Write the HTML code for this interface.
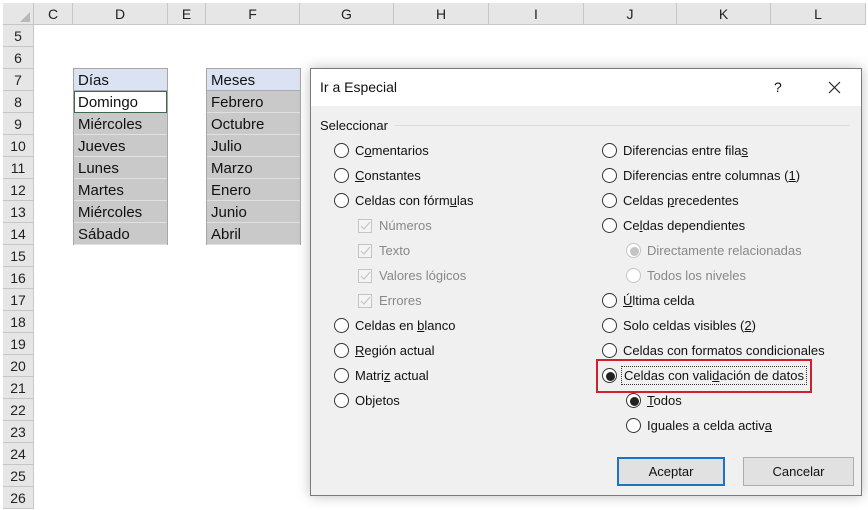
<!DOCTYPE html>
<html><head><meta charset="utf-8"><style>
*{margin:0;padding:0;box-sizing:border-box}
body{width:868px;height:508px;overflow:hidden;background:#fff;font-family:"Liberation Sans",sans-serif;position:relative}
.a{position:absolute}
.ch{position:absolute;top:3px;height:22px;background:#e6e6e6;border-right:1px solid #c6c6c6;border-bottom:1px solid #c6c6c6;font-size:14px;line-height:22px;text-align:center;color:#222}
.rh{position:absolute;left:3px;width:31px;height:22px;background:#e6e6e6;border-bottom:1px solid #c6c6c6;border-right:1px solid #c6c6c6;font-size:14px;line-height:23px;text-align:center;color:#222}
.cell{position:absolute;height:22px;font-size:15px;line-height:24px;padding-left:4px;color:#111;border-bottom:1px solid #e0e0e0;background:#c9c9c9;overflow:hidden}
.o{position:absolute;font-size:13px;line-height:18px;height:18px;color:#111;white-space:nowrap}
.r{position:absolute;width:15px;height:15px;border:1px solid #333;border-radius:50%;background:#fff}
.dis{color:#888}
.dis .r{border-color:#c4c4c4}
.cb{position:absolute;width:14px;height:14px;border:1px solid #c4c4c4;background:#f4f4f4}
u{text-decoration:underline}
</style></head><body>
<div class="ch" style="left:3px;width:31px"></div>
<div class="ch" style="left:34px;width:39px">C</div>
<div class="ch" style="left:73px;width:95px">D</div>
<div class="ch" style="left:168px;width:38px">E</div>
<div class="ch" style="left:206px;width:94px">F</div>
<div class="ch" style="left:300px;width:94px">G</div>
<div class="ch" style="left:394px;width:95px">H</div>
<div class="ch" style="left:489px;width:95px">I</div>
<div class="ch" style="left:584px;width:93px">J</div>
<div class="ch" style="left:677px;width:94px">K</div>
<div class="ch" style="left:771px;width:95px">L</div>
<svg class="a" style="left:20px;top:12px" width="10" height="10"><polygon points="10,0 10,10 0,10" fill="#b8b8b8"/></svg>
<div class="rh" style="top:25px">5</div><div class="rh" style="top:47px">6</div><div class="rh" style="top:69px">7</div><div class="rh" style="top:91px">8</div><div class="rh" style="top:113px">9</div><div class="rh" style="top:135px">10</div><div class="rh" style="top:157px">11</div><div class="rh" style="top:179px">12</div><div class="rh" style="top:201px">13</div><div class="rh" style="top:223px">14</div><div class="rh" style="top:245px">15</div><div class="rh" style="top:267px">16</div><div class="rh" style="top:289px">17</div><div class="rh" style="top:311px">18</div><div class="rh" style="top:333px">19</div><div class="rh" style="top:355px">20</div><div class="rh" style="top:377px">21</div><div class="rh" style="top:399px">22</div><div class="rh" style="top:421px">23</div><div class="rh" style="top:443px">24</div><div class="rh" style="top:465px">25</div><div class="rh" style="top:487px">26</div>

<div class="a" style="left:73px;top:68px;width:95px;height:177px;border:1px solid #a6a6a6"></div>
<div class="cell" style="left:74px;top:69px;width:93px;background:#dbe3f3;border-bottom:1px solid #aab">Días</div>
<div class="cell" style="left:74px;top:91px;width:93px;background:#fff;border:1px solid #3d6b4f;padding-left:3px;line-height:22px">Domingo</div>
<div class="cell" style="left:74px;top:113px;width:93px">Miércoles</div>
<div class="cell" style="left:74px;top:135px;width:93px">Jueves</div>
<div class="cell" style="left:74px;top:157px;width:93px">Lunes</div>
<div class="cell" style="left:74px;top:179px;width:93px">Martes</div>
<div class="cell" style="left:74px;top:201px;width:93px">Miércoles</div>
<div class="cell" style="left:74px;top:223px;width:93px">Sábado</div>

<div class="a" style="left:206px;top:68px;width:95px;height:177px;border:1px solid #a6a6a6"></div>
<div class="cell" style="left:207px;top:69px;width:93px;background:#dbe3f3;border-bottom:1px solid #aab">Meses</div>
<div class="cell" style="left:207px;top:91px;width:93px">Febrero</div>
<div class="cell" style="left:207px;top:113px;width:93px">Octubre</div>
<div class="cell" style="left:207px;top:135px;width:93px">Julio</div>
<div class="cell" style="left:207px;top:157px;width:93px">Marzo</div>
<div class="cell" style="left:207px;top:179px;width:93px">Enero</div>
<div class="cell" style="left:207px;top:201px;width:93px">Junio</div>
<div class="cell" style="left:207px;top:223px;width:93px">Abril</div>

<div class="a" style="left:310px;top:68px;width:552px;height:428px;background:#f0f0f0;border:1px solid #7a7a7a;box-shadow:0 0 12px rgba(0,0,0,.25)">
 <div class="a" style="left:0;top:0;width:550px;height:37px;background:#fff"></div>
 <div class="a" style="left:9px;top:10px;font-size:14px;color:#111">Ir a Especial</div>
 <div class="a" style="left:463px;top:10px;font-size:14px;color:#111">?</div>
 <svg class="a" style="left:517px;top:12px" width="13" height="13"><path d="M1 1L12 12M12 1L1 12" stroke="#222" stroke-width="1.2"/></svg>
 <div class="a" style="left:9px;top:49px;font-size:13px;color:#111">Seleccionar</div>
 <div class="a" style="left:84px;top:56px;width:455px;height:1px;background:#dcdcdc"></div>
</div>

<div class="o" style="left:334px;top:142px"><span class="r" style="left:0;top:1px"></span><span style="margin-left:21px">C<u>o</u>mentarios</span></div>
<div class="o" style="left:334px;top:167px"><span class="r" style="left:0;top:1px"></span><span style="margin-left:21px"><u>C</u>onstantes</span></div>
<div class="o" style="left:334px;top:192px"><span class="r" style="left:0;top:1px"></span><span style="margin-left:21px">Celdas con fórm<u>u</u>las</span></div>
<div class="o dis" style="left:358px;top:217px"><span class="cb" style="left:0;top:2px"></span><span style="margin-left:21px">Números</span></div>
<div class="o dis" style="left:358px;top:242px"><span class="cb" style="left:0;top:2px"></span><span style="margin-left:21px">Texto</span></div>
<div class="o dis" style="left:358px;top:267px"><span class="cb" style="left:0;top:2px"></span><span style="margin-left:21px">Valores lógicos</span></div>
<div class="o dis" style="left:358px;top:292px"><span class="cb" style="left:0;top:2px"></span><span style="margin-left:21px">Errores</span></div>
<svg class="a" style="left:358px;top:219px" width="16" height="90"><g fill="none" stroke="#c4c4c4" stroke-width="1.2"><path d="M3 7l3 3 6-7"/><path d="M3 32l3 3 6-7"/><path d="M3 57l3 3 6-7"/><path d="M3 82l3 3 6-7"/></g></svg>
<div class="o" style="left:334px;top:317px"><span class="r" style="left:0;top:1px"></span><span style="margin-left:21px">Celdas en <u>b</u>lanco</span></div>
<div class="o" style="left:334px;top:342px"><span class="r" style="left:0;top:1px"></span><span style="margin-left:21px"><u>R</u>egión actual</span></div>
<div class="o" style="left:334px;top:367px"><span class="r" style="left:0;top:1px"></span><span style="margin-left:21px">Matri<u>z</u> actual</span></div>
<div class="o" style="left:334px;top:392px"><span class="r" style="left:0;top:1px"></span><span style="margin-left:21px">Objetos</span></div>

<div class="o" style="left:602px;top:142px"><span class="r" style="left:0;top:1px"></span><span style="margin-left:21px">Diferencias entre fila<u>s</u></span></div>
<div class="o" style="left:602px;top:167px"><span class="r" style="left:0;top:1px"></span><span style="margin-left:21px">Diferencias entre columnas (<u>1</u>)</span></div>
<div class="o" style="left:602px;top:192px"><span class="r" style="left:0;top:1px"></span><span style="margin-left:21px">Celdas <u>p</u>recedentes</span></div>
<div class="o" style="left:602px;top:217px"><span class="r" style="left:0;top:1px"></span><span style="margin-left:21px">Ce<u>l</u>das dependientes</span></div>
<div class="o dis" style="left:626px;top:242px"><span class="r" style="left:0;top:1px"></span><span class="a" style="left:4px;top:5px;width:9px;height:9px;border-radius:50%;background:#c4c4c4"></span><span style="margin-left:21px">Directamente relacionadas</span></div>
<div class="o dis" style="left:626px;top:267px"><span class="r" style="left:0;top:1px"></span><span style="margin-left:21px">Todos los niveles</span></div>
<div class="o" style="left:602px;top:292px"><span class="r" style="left:0;top:1px"></span><span style="margin-left:21px"><u>Ú</u>ltima celda</span></div>
<div class="o" style="left:602px;top:317px"><span class="r" style="left:0;top:1px"></span><span style="margin-left:21px">Solo celdas visibles (<u>2</u>)</span></div>
<div class="o" style="left:602px;top:342px"><span class="r" style="left:0;top:1px"></span><span style="margin-left:21px">Celdas con formatos condicionales</span></div>
<div class="o" style="left:602px;top:367px"><span class="r" style="left:0;top:1px"></span><span class="a" style="left:4px;top:5px;width:9px;height:9px;border-radius:50%;background:#222"></span><span style="margin-left:19px;padding:1px 2px;border:1px dotted #333">Celdas con vali<u>d</u>ación de datos</span></div>
<div class="a" style="left:596px;top:359px;width:216px;height:34px;border:2.5px solid #d0202e"></div>
<div class="o" style="left:626px;top:392px"><span class="r" style="left:0;top:1px"></span><span class="a" style="left:4px;top:5px;width:9px;height:9px;border-radius:50%;background:#222"></span><span style="margin-left:21px"><u>T</u>odos</span></div>
<div class="o" style="left:626px;top:417px"><span class="r" style="left:0;top:1px"></span><span style="margin-left:21px">Iguales a celda activ<u>a</u></span></div>

<div class="a" style="left:617px;top:457px;width:108px;height:29px;border:2px solid #1a74c4;background:#e1e1e1;font-size:13px;line-height:25px;text-align:center;color:#111">Aceptar</div>
<div class="a" style="left:743px;top:457px;width:111px;height:29px;border:1px solid #adadad;background:#e1e1e1;font-size:13px;line-height:27px;text-align:center;color:#111">Cancelar</div>
</body></html>
